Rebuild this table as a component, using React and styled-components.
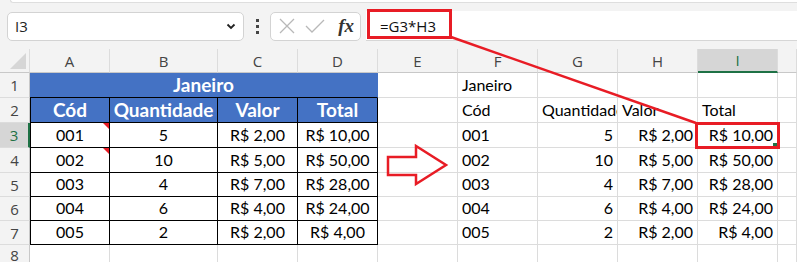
import React from 'react'
import styled, { createGlobalStyle } from 'styled-components'

const GlobalStyle = createGlobalStyle`
  body {
    margin: 0;
    background: #fff;
    font-family: Lato, 'Liberation Sans', sans-serif;
  }
`

const RED = '#e81c25'
const GRID = '#dcdcdc'

const Page = styled.div`
  position: relative;
  width: 797px;
  height: 262px;
  overflow: hidden;
  background: #f3f3f3;
`

const TopStrip = styled.div`
  height: 2px;
  margin-left: 10px;
  background: #fff;
  border-bottom: 1px solid #dedede;
  border-left: 1px solid #dedede;
  border-bottom-left-radius: 4px;
`

const FormulaBar = styled.div`
  display: flex;
  align-items: center;
  height: 30px;
  margin-top: 8px;
  padding-left: 7px;
  margin-bottom: 8px;
`

const NameBox = styled.div`
  box-sizing: border-box;
  display: flex;
  align-items: center;
  justify-content: space-between;
  width: 237px;
  height: 29px;
  padding: 0 7px 0 7px;
  background: #fff;
  border: 1px solid #d3d3d3;
  border-radius: 5px;
  font-family: 'Open Sans', sans-serif;
  font-size: 15px;
  color: #222;
`

const Dots = styled.div`
  display: flex;
  flex-direction: column;
  align-items: center;
  justify-content: center;
  gap: 3px;
  width: 26px;
  span {
    width: 3px;
    height: 3px;
    background: #444;
  }
`

const ButtonGroup = styled.div`
  box-sizing: border-box;
  display: flex;
  align-items: center;
  width: 91px;
  height: 29px;
  padding: 0 6px 0 8px;
  gap: 10px;
  background: #fff;
  border: 1px solid #d3d3d3;
  border-radius: 5px;
`

const Fx = styled.span`
  margin-left: auto;
  font-family: 'Liberation Serif', serif;
  font-style: italic;
  font-weight: bold;
  font-size: 19px;
  color: #333;
`

const FormulaInput = styled.div`
  box-sizing: border-box;
  flex: 1;
  align-self: stretch;
  display: flex;
  align-items: center;
  margin-left: 5px;
  padding-left: 14px;
  background: #fff;
  border-bottom: 1px solid #d6d6d6;
  font-family: 'Open Sans', sans-serif;
  font-size: 15px;
  color: #111;
`

const Sheet = styled.div`
  display: grid;
  grid-template-columns: 30px 80px 108px 80px 80px 80px 80px 80px 80px 80px 1fr;
  grid-template-rows: 24px 25px 25px 25px 25px 24px 24px 24px 1fr;
  height: 213px;
  background: #fff;
`

const ColHead = styled.div`
  box-sizing: border-box;
  display: flex;
  align-items: center;
  justify-content: center;
  background: ${p => (p.$active ? '#d6d6d6' : '#f3f3f3')};
  border-right: 1px solid ${GRID};
  border-bottom: ${p => (p.$active ? '2px solid #1e7145' : '1px solid #c8c8c8')};
  font-family: 'Open Sans', sans-serif;
  font-size: 15px;
  color: ${p => (p.$active ? '#1e7145' : '#444')};
`

const Corner = styled(ColHead)`
  position: relative;
  &::after {
    content: '';
    position: absolute;
    right: 3px;
    bottom: 3px;
    border-style: solid;
    border-width: 0 0 16px 16px;
    border-color: transparent transparent #d6d6d6 transparent;
  }
`

const RowHead = styled.div`
  box-sizing: border-box;
  display: flex;
  align-items: center;
  justify-content: center;
  background: ${p => (p.$active ? '#d6d6d6' : '#f3f3f3')};
  border-right: ${p => (p.$active ? '2px solid #1e7145' : '1px solid #c8c8c8')};
  border-bottom: 1px solid ${GRID};
  font-family: 'Open Sans', sans-serif;
  font-size: 15px;
  color: ${p => (p.$active ? '#1e7145' : '#444')};
`

const justify = { left: 'flex-start', center: 'center', right: 'flex-end' }

const Cell = styled.div`
  position: relative;
  box-sizing: border-box;
  display: flex;
  align-items: flex-end;
  justify-content: ${p => justify[p.$align || 'left']};
  grid-column: ${p => (p.$span ? `span ${p.$span}` : 'auto')};
  padding: 0 4px ${p => (p.$head ? '1px' : '2px')};
  overflow: hidden;
  white-space: nowrap;
  font-size: ${p => (p.$head ? '19px' : '16px')};
  line-height: ${p => (p.$head ? '22px' : '20px')};
  font-weight: ${p => (p.$head ? 700 : 400)};
  color: ${p => (p.$head ? '#fff' : '#000')};
  background: ${p => (p.$head ? '#4472c4' : '#fff')};
  border-right: 1px solid ${p => (p.$title ? '#4472c4' : p.$boxed ? '#000' : GRID)};
  border-bottom: 1px solid ${p => (p.$boxed || p.$title ? '#000' : GRID)};
  ${p => p.$edge && 'border-left: 1px solid #000;'}
`

const Note = styled.span`
  position: absolute;
  top: 0;
  right: 0;
  border-style: solid;
  border-width: 0 6px 6px 0;
  border-color: transparent ${RED} transparent transparent;
`

const FillHandle = styled.span`
  position: absolute;
  right: -2px;
  bottom: -2px;
  width: 5px;
  height: 5px;
  background: #1e7145;
  border: 1px solid #fff;
`

const Overlay = styled.svg`
  position: absolute;
  top: 0;
  left: 0;
  pointer-events: none;
`

const columns = ['A', 'B', 'C', 'D', 'E', 'F', 'G', 'H', 'I', '']

const items = [
  ['001', 5, 'R$ 2,00', 'R$ 10,00'],
  ['002', 10, 'R$ 5,00', 'R$ 50,00'],
  ['003', 4, 'R$ 7,00', 'R$ 28,00'],
  ['004', 6, 'R$ 4,00', 'R$ 24,00'],
  ['005', 2, 'R$ 2,00', 'R$ 4,00'],
]

const headings = ['Cód', 'Quantidade', 'Valor', 'Total']

function Chevron() {
  return (
    <svg width="10" height="7" viewBox="0 0 10 7">
      <path d="M1.5 1.5 L5 5 L8.5 1.5" fill="none" stroke="#222" strokeWidth="1.8" />
    </svg>
  )
}

function Cancel() {
  return (
    <svg width="16" height="16" viewBox="0 0 16 16">
      <path d="M1 1 L15 15 M15 1 L1 15" stroke="#b8b8b8" strokeWidth="1.3" />
    </svg>
  )
}

function Confirm() {
  return (
    <svg width="20" height="16" viewBox="0 0 20 16">
      <path d="M1 8 L7 14 L19 2" fill="none" stroke="#b8b8b8" strokeWidth="1.3" />
    </svg>
  )
}

export default function App() {
  return (
    <Page>
      <GlobalStyle />
      <TopStrip />
      <FormulaBar>
        <NameBox>
          I3
          <Chevron />
        </NameBox>
        <Dots>
          <span />
          <span />
          <span />
        </Dots>
        <ButtonGroup>
          <Cancel />
          <Confirm />
          <Fx>fx</Fx>
        </ButtonGroup>
        <FormulaInput>=G3*H3</FormulaInput>
      </FormulaBar>

      <Sheet>
        <Corner />
        {columns.map((c, i) => (
          <ColHead key={i} $active={c === 'I'}>
            {c}
          </ColHead>
        ))}

        <RowHead>1</RowHead>
        <Cell $span={4} $head $title $align="center">
          Janeiro
        </Cell>
        <Cell />
        <Cell>Janeiro</Cell>
        <Cell />
        <Cell />
        <Cell />
        <Cell />

        <RowHead>2</RowHead>
        {headings.map((h, i) => (
          <Cell key={h} $head $boxed $edge={i === 0} $align="center">
            {h}
          </Cell>
        ))}
        <Cell />
        <Cell>Cód</Cell>
        <Cell>Quantidade</Cell>
        <Cell>Valor</Cell>
        <Cell>Total</Cell>
        <Cell />

        {items.map(([cod, qty, price, total], r) => (
          <React.Fragment key={cod}>
            <RowHead $active={r === 0}>{r + 3}</RowHead>
            <Cell $boxed $edge $align="center">
              {cod}
              {r < 2 && <Note />}
            </Cell>
            <Cell $boxed $align="center">{qty}</Cell>
            <Cell $boxed $align="center">{price}</Cell>
            <Cell $boxed $align="center">{total}</Cell>
            <Cell />
            <Cell>{cod}</Cell>
            <Cell $align="right">{qty}</Cell>
            <Cell $align="right">{price}</Cell>
            <Cell $align="right" style={r === 0 ? { overflow: 'visible' } : undefined}>
              {total}
              {r === 0 && <FillHandle />}
            </Cell>
            <Cell />
          </React.Fragment>
        ))}

        <RowHead>8</RowHead>
        {columns.map((c, i) => (
          <Cell key={i} />
        ))}
      </Sheet>

      <Overlay width="797" height="262" viewBox="0 0 797 262">
        <rect x="368.5" y="10.5" width="82" height="27" fill="none" stroke={RED} strokeWidth="3" />
        <line x1="451" y1="37" x2="696" y2="123" stroke={RED} strokeWidth="2.5" />
        <rect x="696.5" y="123.5" width="82" height="24" fill="none" stroke={RED} strokeWidth="3" />
        <polygon
          points="388,157 416,157 416,146 446,165 416,184 416,175 388,175"
          fill="none"
          stroke={RED}
          strokeWidth="2.5"
          strokeLinejoin="miter"
        />
      </Overlay>
    </Page>
  )
}
